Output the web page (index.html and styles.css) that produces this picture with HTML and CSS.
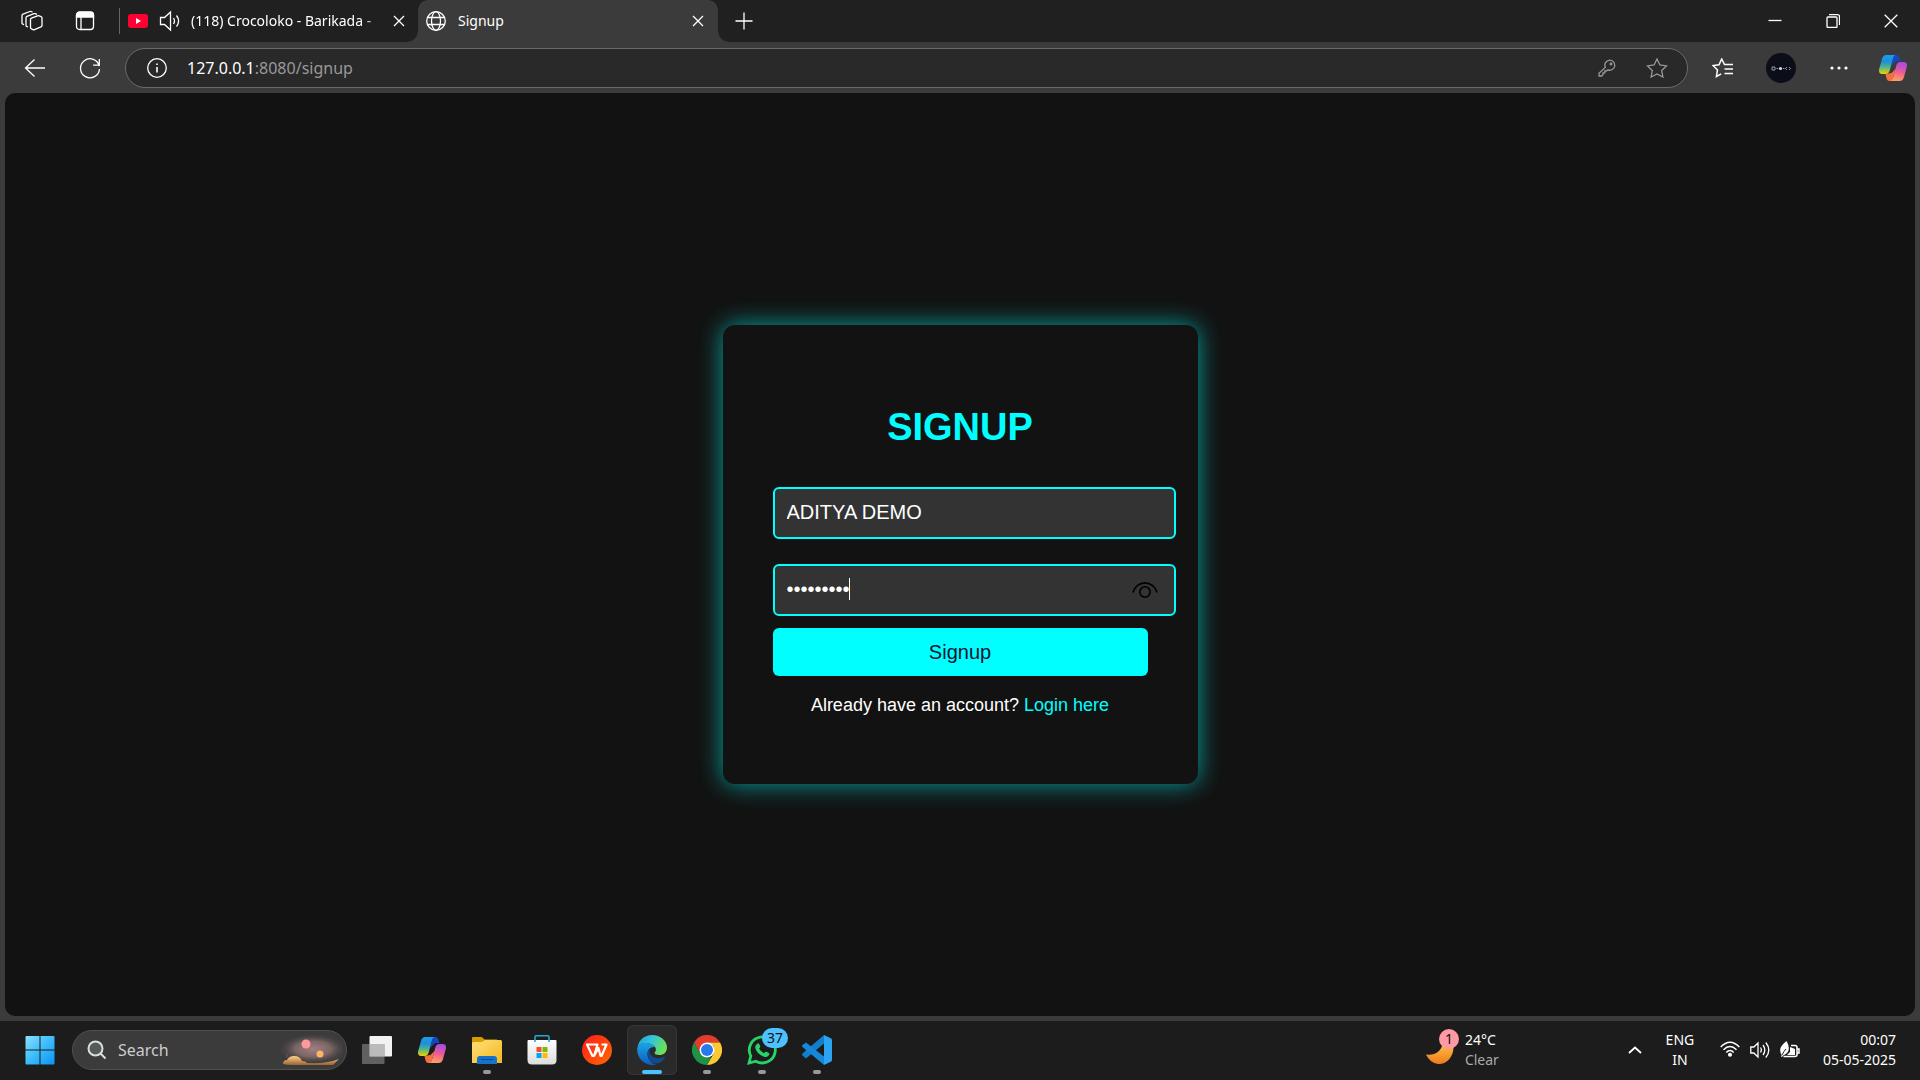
FILE: index.html
```html
<!DOCTYPE html>
<html lang="en">
<head>
<meta charset="utf-8">
<title>Signup</title>
<link rel="stylesheet" href="styles.css">
</head>
<body>
<svg class="defs" aria-hidden="true">
  <defs>
    <linearGradient id="cpBlue" x1="0" y1="0" x2="0" y2="1"><stop offset="0" stop-color="#1b9bf0"/><stop offset=".35" stop-color="#1f8fd8"/><stop offset=".65" stop-color="#52b788"/><stop offset="1" stop-color="#f5d000"/></linearGradient>
    <linearGradient id="cpPink" x1=".6" y1="0" x2=".4" y2="1"><stop offset="0" stop-color="#a34be8"/><stop offset=".5" stop-color="#ee5a95"/><stop offset="1" stop-color="#ffa25c"/></linearGradient>
    <linearGradient id="win" x1="0" y1="0" x2="1" y2="1"><stop offset="0" stop-color="#8be0ff"/><stop offset=".5" stop-color="#3cbcfb"/><stop offset="1" stop-color="#0a93f5"/></linearGradient>
    <linearGradient id="fold" x1="0" y1="0" x2="1" y2="1"><stop offset="0" stop-color="#ffe07a"/><stop offset="1" stop-color="#f5b81c"/></linearGradient>
    <linearGradient id="bag" x1="0" y1="0" x2="0" y2="1"><stop offset="0" stop-color="#fff"/><stop offset="1" stop-color="#dcdcdc"/></linearGradient>
    <linearGradient id="wps" x1="0" y1="0" x2="1" y2="1"><stop offset="0" stop-color="#ff1a1a"/><stop offset="1" stop-color="#ff6a00"/></linearGradient>
    <linearGradient id="edgeTop" x1="0" y1="0" x2="1" y2=".4"><stop offset="0" stop-color="#1ca0dc"/><stop offset=".5" stop-color="#35c3d9"/><stop offset="1" stop-color="#6be05a"/></linearGradient>
    <linearGradient id="edgeLow" x1="0" y1="0" x2="0" y2="1"><stop offset="0" stop-color="#1ba6e6"/><stop offset="1" stop-color="#0c5bbd"/></linearGradient>
    <linearGradient id="moon" x1="0" y1="0" x2="0" y2="1"><stop offset="0" stop-color="#ffc94a"/><stop offset="1" stop-color="#ee7b1c"/></linearGradient>
    <radialGradient id="sky"><stop offset="0" stop-color="#a08080"/><stop offset=".5" stop-color="#7c6565"/><stop offset="1" stop-color="#3b3b3b" stop-opacity="0"/></radialGradient>
    <linearGradient id="dune" x1="0" y1="0" x2="0" y2="1"><stop offset="0" stop-color="#ffd08a"/><stop offset="1" stop-color="#9c6233"/></linearGradient>
    <symbol id="copilot" viewBox="0 0 28 26">
      <path d="M15 0h2.500c2 0 2.700 1.500 3.200 3.500L21.500 6H17l-5 5z" fill="#1546c4"/>
      <path d="M13 26h-2.500c-2 0-2.700-1.500-3.200-3.500L6.500 19l6-1 4-4z" fill="#f4713f"/>
      <path d="M7.500 0H17c-2 0-2.600 1.700-3.200 4l-3 11c-.7 2.700-1.800 4-4.300 4H3c-2.600 0-3.500-2-2.800-5L3 4C3.700 1.400 5 0 7.500 0z" fill="url(#cpBlue)"/>
      <path d="M20.500 26H11c2 0 2.600-1.700 3.200-4l3-11c.7-2.700 1.800-4 4.300-4H25c2.600 0 3.500 2 2.800 5L25 22c-.7 2.600-2 4-4.500 4z" fill="url(#cpPink)"/>
    </symbol>
  </defs>
</svg>

<header class="tabstrip">
  <button class="strip-btn" aria-label="Workspaces">
    <svg class="line" width="22" height="22" viewBox="0 0 22 22"><path d="M9.500 9.500q0-1 1-1.400l6-2.300q.8-.3 1.600 0l2 .8q.9.300.9 1.200v7.700q0 1-1 1.400l-6.500 2.700q-.8.300-1.500 0l-1.600-.7q-.9-.4-.9-1.300z"/><path d="M7 17l-1.400-.6q-.6-.3-.6-1V7.800q0-1 1-1.400l7-2.700q.6-.2 1.200 0l1.800.7M3 14.700l-1.300-.6q-.7-.3-.7-1V5.500q0-1 1-1.400l6.800-2.600q.6-.2 1.200 0l1.500.6"/></svg>
  </button>
  <button class="strip-btn" aria-label="Tab actions menu">
    <svg class="line" width="20" height="20" viewBox="0 0 20 20"><rect x="1.500" y="1.500" width="17" height="17" rx="3"/><path d="M1.500 6V4a3 3 0 0 1 3-3h11a3 3 0 0 1 3 3v2z" fill="#fff"/><path d="M6 6v12"/></svg>
  </button>
  <span class="divider"></span>
  <div class="tab">
    <svg width="20" height="14" viewBox="0 0 20 14"><rect width="20" height="14" rx="3" fill="#ff0033"/><path d="M8 4l5 3-5 3z" fill="#fff"/></svg>
    <button class="mute" aria-label="Mute tab"><svg class="line" width="22" height="22" viewBox="0 0 22 22"><path d="M1.500 7.500h4l6-5.500v18l-6-5.500h-4zM14.500 8q2 3 0 6M17.500 5.500q4.200 5.500 0 11"/></svg></button>
    <span class="tab-title fade">(118) Crocoloko - Barikada -</span>
    <button class="close" aria-label="Close tab"><svg class="line" width="12" height="12" viewBox="0 0 12 12"><path d="M1 1l10 10M11 1L1 11"/></svg></button>
  </div>
  <div class="tab active">
    <svg class="line" width="20" height="20" viewBox="0 0 20 20"><circle cx="10" cy="10" r="9.300"/><ellipse cx="10" cy="10" rx="4.500" ry="9.300"/><path d="M1.500 6.500h17M1.500 13.500h17"/></svg>
    <span class="tab-title">Signup</span>
    <button class="close" aria-label="Close tab"><svg class="line" width="12" height="12" viewBox="0 0 12 12"><path d="M1 1l10 10M11 1L1 11"/></svg></button>
  </div>
  <button class="new-tab" aria-label="New tab"><svg class="line" width="18" height="18" viewBox="0 0 18 18"><path d="M9 .5v17M.5 9h17"/></svg></button>
  <div class="window-btns">
    <button aria-label="Minimize"><svg class="line" width="14" height="14" viewBox="0 0 14 14"><path d="M.5 6.500h13"/></svg></button>
    <button aria-label="Restore"><svg class="line" width="14" height="14" viewBox="0 0 14 14"><rect x="1" y="3" width="10" height="10.500" rx="1"/><path d="M3 .7h8.500q2 0 2 2V11"/></svg></button>
    <button aria-label="Close"><svg class="line" width="14" height="14" viewBox="0 0 14 14"><path d="M.7.7l12.600 12.600M13.300.7L.7 13.300"/></svg></button>
  </div>
</header>

<nav class="toolbar">
  <button class="nav-btn" aria-label="Back"><svg class="line" width="22" height="20" viewBox="0 0 22 20"><path d="M21 10H1.500M10.500 1.500L1.500 10l9 8.500"/></svg></button>
  <button class="nav-btn" aria-label="Refresh"><svg class="line" width="22" height="22" viewBox="0 0 22 22"><path d="M20.300 9.200A9.500 9.500 0 1 0 20.500 12M20.300 2v6.200h-6.200"/></svg></button>
  <div class="address">
    <svg class="line info" width="20" height="20" viewBox="0 0 20 20"><circle cx="10" cy="10" r="9.300"/><path d="M10 9v5.500M10 5.500v1.500" stroke-width="1.600"/></svg>
    <span class="url"><b>127.0.0.1</b>:8080/signup</span>
    <button aria-label="Passwords"><svg class="line dim" width="18" height="18" viewBox="0 0 18 18"><path d="M7.300 8.400A5 5 0 1 1 9.800 10.800L8.500 12H6.800v1.800H5v1.700L3.700 17H1v-2.700z"/><circle cx="13" cy="5" r=".8" fill="#999"/></svg></button>
    <button aria-label="Add to favorites"><svg class="line dim" width="22" height="20" viewBox="0 0 22 20"><path d="M11 1l2.900 6 6.600.9-4.800 4.600 1.200 6.500L11 15.900 5.100 19l1.200-6.500L1.500 7.900 8.100 7z"/></svg></button>
  </div>
  <button class="nav-btn" aria-label="Favorites"><svg class="line" width="22" height="20" viewBox="0 0 22 20"><path d="M12.800 6.500h-.3L9.700 1 7 6.700l-6 .8 4.500 4.400L4.400 18.500l4.800-2.600M12.500 6.500H21M12.500 11H21M12.500 15.500H21" stroke-width="1.500"/></svg></button>
  <button class="nav-btn" aria-label="Profile"><svg width="30" height="30" viewBox="0 0 30 30"><circle cx="15" cy="15" r="15" fill="#0b0d18"/><path d="M6 14h3v3H6zM10.500 15.500h1.500M17 15.500h1.500M21 14l-1.500 1.500L21 17M23 14l1.500 1.500L23 17" fill="none" stroke="#bbb" stroke-width=".8"/><circle cx="14.500" cy="15.500" r="1.600" fill="#ddd"/></svg></button>
  <button class="nav-btn" aria-label="Settings and more"><svg width="18" height="4" viewBox="0 0 18 4" fill="#fff"><circle cx="2" cy="2" r="1.600"/><circle cx="9" cy="2" r="1.600"/><circle cx="16" cy="2" r="1.600"/></svg></button>
  <button class="nav-btn" aria-label="Copilot"><svg width="28" height="26"><use href="#copilot"/></svg></button>
</nav>

<main class="viewport">
  <form class="card">
    <h1>SIGNUP</h1>
    <input class="field" type="text" aria-label="Username" value="ADITYA DEMO">
    <div class="password">
      <input class="field" type="password" aria-label="Password" value="aditya123">
      <span class="caret"></span>
      <button class="reveal" type="button" aria-label="Show password"><svg width="26" height="18" viewBox="0 0 26 18" fill="none" stroke="#000" stroke-width="1.600"><path d="M1 11.500a12.300 12.300 0 0 1 24 0"/><circle cx="13" cy="11" r="5.200"/></svg></button>
    </div>
    <button class="submit" type="button">Signup</button>
    <p>Already have an account? <a href="#login">Login here</a></p>
  </form>
</main>

<footer class="taskbar">
  <button class="task" aria-label="Start"><svg width="30" height="30" viewBox="0 0 30 30" fill="url(#win)"><path d="M1.500 1H14.500V14.500H.5V2q0-1 1-1zM15.500 1H28.500q1 0 1 1V14.500H15.500zM.5 15.500H14.500V29.500H1.500q-1 0-1-1zM15.500 15.500H29.500V28.500q0 1-1 1H15.500z"/></svg></button>
  <label class="search">
    <svg width="20" height="20" viewBox="0 0 20 20" fill="none" stroke="#ddd" stroke-width="2"><circle cx="8.500" cy="8.500" r="7" fill="#555b5b"/><path d="M13.500 13.500L18.500 18.500"/></svg>
    <input type="text" placeholder="Search">
    <svg width="66" height="34" viewBox="0 0 66 34"><ellipse cx="36" cy="16" rx="36" ry="16" fill="url(#sky)"/><circle cx="29" cy="11" r="4.500" fill="#ff989c"/><circle cx="43" cy="21" r="3.500" fill="#ffb366"/><path d="M6 31q0-4 4-4 2-4 7-4 6 0 8 5 4 0 5 2 20 1 32-4l-6 6H15q-6 0-9-1z" fill="url(#dune)"/><path d="M10 21v4M30 25v3" stroke="#7b5138"/></svg>
  </label>
  <button class="task" aria-label="Task view"><svg width="30" height="28" viewBox="0 0 30 28"><rect x="7.500" width="22.500" height="20.500" rx="1" fill="#f2f2f2"/><rect y="8" width="22.500" height="20" rx="1" fill="#777" fill-opacity=".75"/><path d="M7.500 8h15v12.500h-15z" fill="#bbb"/></svg></button>
  <button class="task" aria-label="Copilot"><svg width="28" height="26"><use href="#copilot"/></svg></button>
  <button class="task running" aria-label="File Explorer"><svg width="30" height="28" viewBox="0 0 30 28"><path d="M0 8V2Q0 1 1 1h8q1 0 2 1l1.500 1.500H25V8z" fill="#d99c00"/><path d="M0 7.500Q0 6 1.500 6H9q1.500 0 2.500-1t2-1h15Q30 4 30 5.500V27H0z" fill="url(#fold)"/><path d="M5 28v-5q0-3 3-3h14q3 0 3 3v5z" fill="#1673c9"/><path d="M9 23.500h12" stroke="#0b4c95"/></svg></button>
  <button class="task" aria-label="Microsoft Store"><svg width="30" height="30" viewBox="0 0 30 30"><path d="M8 8V2q0-1.200 1.200-1.200h11.600Q22 .8 22 2v6" fill="none" stroke="#22a7dc" stroke-width="1.600"/><path d="M.5 6q0-1 1-1h27q1 0 1 1v19q0 4.500-4.500 4.500H5Q.5 29.500.5 25z" fill="url(#bag)"/><path d="M9.500 12H14.500v5H9.500z" fill="#f25022"/><path d="M15.500 12h5v5h-5z" fill="#7fba00"/><path d="M9.500 18h5v5h-5z" fill="#00a4ef"/><path d="M15.500 18h5v5h-5z" fill="#ffb900"/><path d="M8 5v2M22 5v2" stroke="#22a7dc" stroke-width="1.600"/></svg></button>
  <button class="task" aria-label="WPS Office"><svg width="30" height="30" viewBox="0 0 30 30"><circle cx="15" cy="15" r="15" fill="url(#wps)"/><path d="M5 9.500h10.500l-3.500 11.500h-1.500zM12 21l4.500-8 2 8h1L24.500 9.500h-5" fill="none" stroke="#fff" stroke-width="2.200" stroke-linejoin="round"/></svg></button>
  <button class="task running current" aria-label="Microsoft Edge"><svg width="30" height="30" viewBox="0 0 30 30"><path d="M.5 13C1.500 5 7.500 0 15 0c8.500 0 15 6 15 12.500 0 5-3.500 7.500-7.500 7.500-3 0-5-1-5-2 0-.8 1.400-1.300 1.400-3.500C18.900 11 14 8 9 8 5 8 1.500 10 .5 13z" fill="url(#edgeTop)"/><path d="M.3 13C1.500 9.500 5.500 8 9 8c4 0 7.500 1.500 9 4-4.500-.5-7.500 3-7.500 7 0 5 3.500 9.500 8.500 10.500Q17 30 15 30C6.500 30-.8 22 .3 13z" fill="url(#edgeLow)"/><path d="M13 13c-1.500 1.300-2.500 3-2.500 5.500 0 5.500 4.500 10.500 10 10 3-.8 5.500-2.800 7.300-5.500.5-.8-.2-1.200-.8-.9-6 3-14 .5-14.500-6q0-1.700.5-3.100z" fill="#114a91"/></svg></button>
  <button class="task running" aria-label="Google Chrome"><svg width="30" height="30" viewBox="0 0 30 30"><path d="M2 7.500A15 15 0 0 1 28 7.500H15L8.500 19z" fill="#e33b2e"/><path d="M28 7.500A15 15 0 0 1 15 30l6.500-11.200L21.500 11 15 7.500z" fill="#fcc934"/><path d="M15 30A15 15 0 0 1 2 7.500l6.500 11.200L15 22.500h4.300z" fill="#1e9245"/><circle cx="15" cy="15" r="7.500" fill="#fff"/><circle cx="15" cy="15" r="6" fill="#2a78ee"/></svg></button>
  <button class="task running" aria-label="WhatsApp, 37 unread"><svg width="30" height="30" viewBox="0 0 30 30"><path d="M2 28l1.800-7A13 13 0 1 1 8.800 26.200z" fill="none" stroke="#25d366" stroke-width="2.800"/><path d="M10.500 8.500q1.500-.5 2 1l.8 2q0 1-1.200 2 1.800 3.500 5 4.700 1.200-1.800 2.200-1.400l2.500 1.300q1 .6.2 2-1.500 2.400-4.200 1.800-7.600-2-9.600-8.800-.3-3 2.300-4.600z" fill="#25d366"/></svg><span class="count">37</span></button>
  <button class="task running" aria-label="Visual Studio Code"><svg width="30" height="30" viewBox="0 0 30 30"><path d="M22 0v8.500L4 23.500l-3.500-3q-1-1 0-2z" fill="#0f7fce"/><path d="M22 30v-8.500L4 7.500.5 10q-1 1 0 2z" fill="#1588d8"/><path d="M22 0l6.800 3.200q1.200.6 1.200 2v19.600q0 1.400-1.200 2L22 30z" fill="#2ba4f2"/></svg></button>

  <div class="weather">
    <span class="weather-icon"><svg width="28" height="28" viewBox="0 0 28 28"><path d="M0 17.500Q14 19 17 6l9-2Q30 14 23 22.500 18 27.500 12 27 4 26 0 17.500z" fill="url(#moon)"/></svg><span class="alert">1</span></span>
    <span class="stack"><span>24°C</span><span class="muted">Clear</span></span>
  </div>
  <div class="tray">
    <button aria-label="Show hidden icons"><svg width="14" height="8" viewBox="0 0 14 8" fill="none" stroke="#fff" stroke-width="1.800"><path d="M1 7l6-5.500L13 7"/></svg></button>
    <div class="stack lang"><span>ENG</span><span>IN</span></div>
    <div class="status">
      <svg width="20" height="16" viewBox="0 0 20 16" fill="none" stroke="#fff" stroke-width="1.500"><path d="M.7 6q9.300-9.500 18.600 0M3.500 8.800q6.500-6.500 13 0M6.300 11.500q3.700-3.800 7.400 0"/><circle cx="10" cy="13.800" r="1.300" fill="#fff"/></svg>
      <svg width="20" height="18" viewBox="0 0 20 18" fill="none" stroke="#fff" stroke-width="1.300"><path d="M.8 6h3L8 2v14l-4.200-4h-3zM10.500 6.500q1.700 2.500 0 5M13 4q3.600 5 0 10M15.800 1.500q6 7.500 0 15"/></svg>
      <svg width="20" height="18" viewBox="0 0 20 18"><path d="M11 4.500h4q2 0 2 2v7q0 2-2 2H3.500M17 8h2v4h-2" fill="none" stroke="#fff" stroke-width="1.500"/><path d="M6.500 0Q9 4 8.800 8T3 14.500l-1 1.500-1-.5.700-1.500Q-.5 11 .5 7 1.500 4 6.500 0zM10 6v5l-3 3h8V8z" fill="#fff"/><path d="M2 14q2-4 4-6" stroke="#222" fill="none"/></svg>
    </div>
    <div class="stack clock"><span>00:07</span><span>05-05-2025</span></div>
  </div>
</footer>
</body>
</html>
```
FILE: styles.css
```css
* { box-sizing: border-box; }
body {
  margin: 0;
  min-height: 100vh;
  display: flex;
  flex-direction: column;
  background: #3b3b3b;
  color: #fff;
  font: 14px/20px "Noto Sans", sans-serif;
}
button {
  border: 0;
  padding: 0;
  background: none;
  color: inherit;
  font: inherit;
  display: flex;
  align-items: center;
  justify-content: center;
}
svg { flex: none; }
.defs { position: absolute; width: 0; height: 0; }
.line { fill: none; stroke: #fff; stroke-width: 1.3; }
.line.dim { stroke: #999; }

/* Tab strip */
.tabstrip { display: flex; height: 42px; background: #202020; }
.strip-btn { width: 50px; }
.strip-btn:first-child { width: 60px; padding-left: 4px; }
.divider { width: 1px; height: 26px; margin: 8px 8px 8px 9px; background: #666; }
.tab { display: flex; align-items: center; width: 290px; padding-right: 12px; }
.mute { margin: 0 10px 0 11px; }
.tab-title { flex: 1; white-space: nowrap; }
.fade { -webkit-mask-image: linear-gradient(90deg, #000 90%, transparent 106%); mask-image: linear-gradient(90deg, #000 90%, transparent 106%); }
.close { width: 14px; margin-left: 12px; }
.tab.active {
  position: relative;
  width: 300px;
  padding: 0 13px 0 8px;
  gap: 12px;
  background: #3b3b3b;
  border-radius: 10px 10px 0 0;
}
.tab.active::before, .tab.active::after {
  content: "";
  position: absolute;
  bottom: 0;
  width: 10px;
  height: 10px;
}
.tab.active::before { right: 100%; background: radial-gradient(circle at 0 0, transparent 9px, #3b3b3b 10px); }
.tab.active::after { left: 100%; background: radial-gradient(circle at 100% 0, transparent 9px, #3b3b3b 10px); }
.new-tab { width: 52px; }
.window-btns { display: flex; margin-left: auto; }
.window-btns button { width: 58px; }

/* Toolbar */
.toolbar { display: flex; align-items: center; height: 51px; padding: 1px 2px 0 7px; }
.nav-btn { width: 55px; height: 40px; }
.nav-btn:nth-of-type(n+3) { width: 58px; }
.nav-btn:last-child { width: 50px; }
.address {
  flex: 1;
  display: flex;
  align-items: center;
  height: 40px;
  margin: 0 6px 0 8px;
  padding: 0 5px 0 21px;
  border: 1px solid #6b6b6b;
  border-radius: 20px;
  background: #292929;
}
.url { flex: 1; margin-left: 20px; font-size: 16px; color: #999; }
.url b { font-weight: 400; color: #fff; }
.address button { width: 50px; }

/* Signup page */
.viewport {
  flex: 1;
  display: flex;
  align-items: center;
  justify-content: center;
  margin: 0 5px 5px;
  border-radius: 10px;
  background: #121212;
  font-family: "Liberation Sans", Arial, sans-serif;
}
.card {
  display: flex;
  flex-direction: column;
  width: 475px;
  padding: 80px 50px 68px;
  border-radius: 12px;
  background: #121212;
  box-shadow: 0 0 25px rgba(0, 255, 255, .6);
}
.card h1 { margin: 0 0 38px; font-size: 38px; line-height: 44px; text-align: center; color: #0ff; }
.field {
  box-sizing: content-box;
  width: 100%;
  height: 24px;
  padding: 11px 12px 13px;
  border: 2px solid #0ff;
  border-radius: 6px;
  outline: 0;
  background: #333;
  color: #fff;
  font: 20px/24px "Liberation Sans", Arial, sans-serif;
}
.password { position: relative; margin: 25px 0 12px; }
.password .field { display: block; }
.caret { position: absolute; left: 76px; top: 14px; width: 1px; height: 22px; background: #fff; }
.reveal { position: absolute; right: -10px; top: 17px; }
.submit { height: 48px; border-radius: 6px; background: #0ff; color: #121232; font-size: 20px; }
.card p { margin: 18px 0 0; font-size: 18px; line-height: 22px; text-align: center; }
.card a { color: #0ff; text-decoration: none; }

/* Taskbar */
.taskbar {
  display: flex;
  align-items: center;
  height: 59px;
  padding: 0 24px 1px 15px;
  background: #1c1c1c;
}
.task {
  position: relative;
  width: 50px;
  height: 50px;
  margin-right: 5px;
  border-radius: 6px;
}
.running::after {
  content: "";
  position: absolute;
  bottom: 1px;
  width: 8px;
  height: 4px;
  border-radius: 2px;
  background: #999;
}
.current { background: #2a2a2a; box-shadow: inset 0 0 0 1px #363636; }
.current::after { width: 20px; background: #4cc2ff; }
.count {
  position: absolute;
  left: 25px;
  top: 3px;
  width: 26px;
  border-radius: 10px;
  background: #4cc2ff;
  color: #111;
}
.search {
  display: flex;
  align-items: center;
  width: 275px;
  height: 40px;
  margin: 0 5px 0 2px;
  padding: 0 3px 0 14px;
  border: 1px solid #505050;
  border-radius: 20px;
  background: #3b3b3b;
}
.search input {
  flex: 1;
  min-width: 0;
  padding: 0 0 0 11px;
  border: 0;
  outline: 0;
  background: none;
  color: #ccc;
  font: 16px/24px "Noto Sans", sans-serif;
}
.search input::placeholder { color: #ccc; }
.weather { display: flex; align-items: center; gap: 11px; margin-left: auto; }
.weather-icon { position: relative; display: flex; padding-top: 2px; }
.alert {
  position: absolute;
  left: 13px;
  top: -6px;
  width: 20px;
  border-radius: 10px;
  background: #ff99a4;
  color: #111;
  text-align: center;
}
.stack { display: flex; flex-direction: column; }
.muted { color: #aaa; }
.tray { display: flex; align-items: center; margin-left: 129px; }
.lang { width: 78px; text-align: center; padding-right: 2px; }
.status { display: flex; gap: 10px; margin-right: 23px; }
.clock { text-align: right; }
```
